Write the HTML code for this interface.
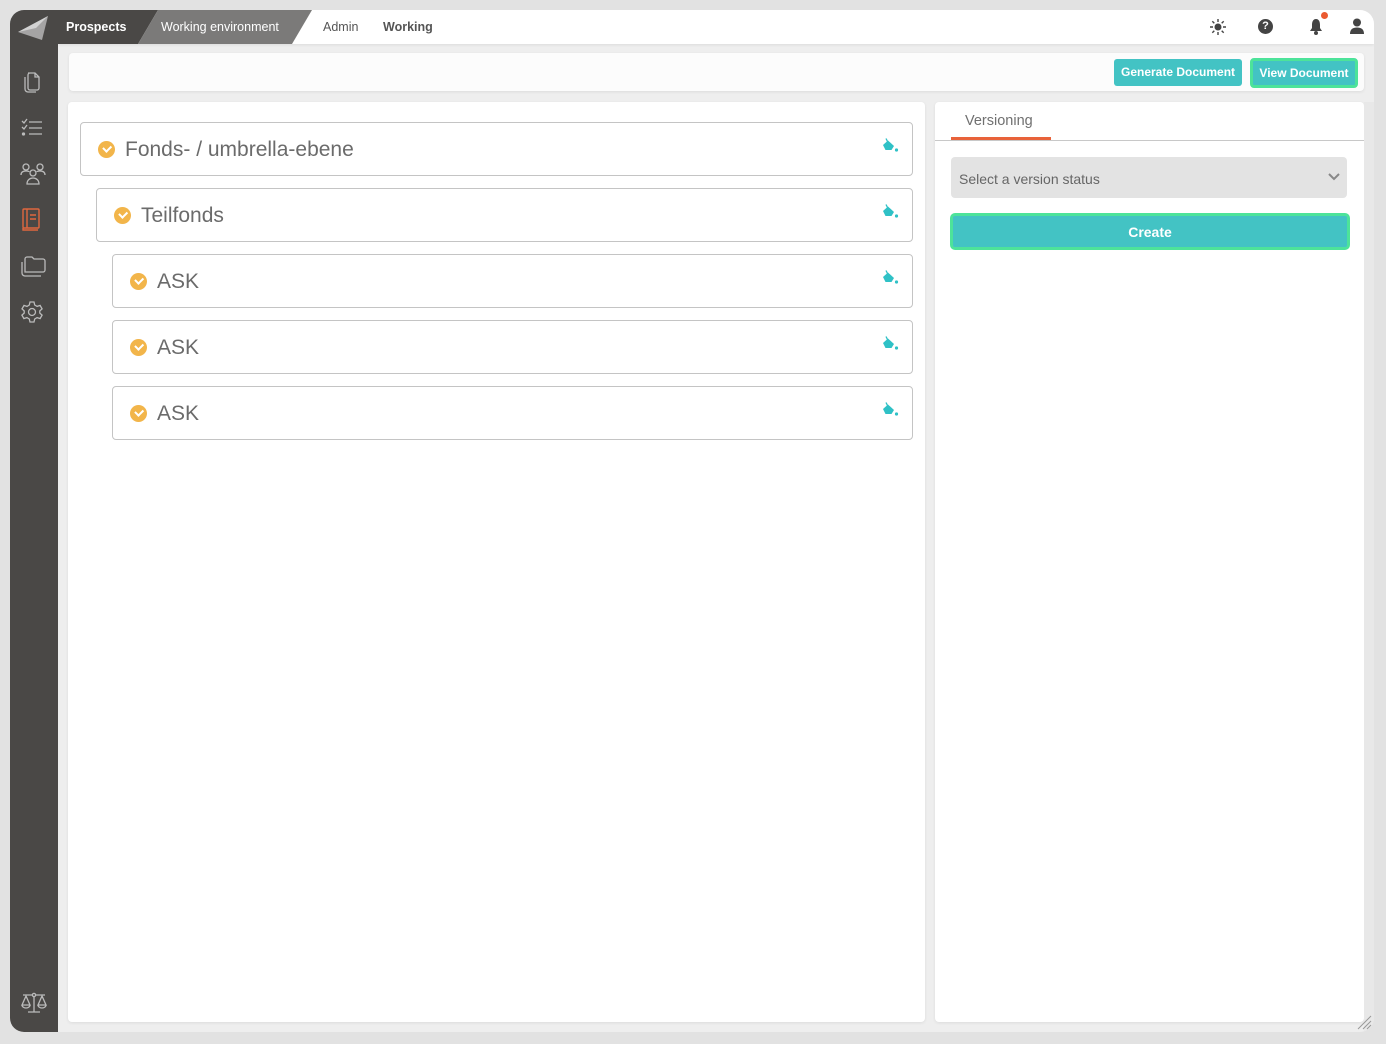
<!DOCTYPE html>
<html><head><meta charset="utf-8"><style>
*{box-sizing:border-box;margin:0;padding:0}
body{width:1386px;height:1044px;background:#e2e2e2;font-family:"Liberation Sans",sans-serif;position:relative;overflow:hidden}
.frame{position:absolute;left:10px;top:10px;width:1364px;height:1022px;border-radius:14px;background:#eeeeee;overflow:hidden}
.side{position:absolute;left:0;top:0;width:48px;height:1022px;background:#4a4846}
.top{position:absolute;left:48px;top:0;right:0;height:34px;background:#fff;box-shadow:0 1px 3px rgba(0,0,0,.08)}
.a{position:absolute}
.card{position:absolute;background:#fff;border-radius:4px;box-shadow:0 1px 3px rgba(0,0,0,.08)}
.row{position:absolute;border:1px solid #c4c4c4;border-radius:4px;background:#fff;height:54px}
.row .chk{position:absolute;left:17px;top:18px;width:17px;height:17px;border-radius:50%;background:#f2b54a}
.chk::after{content:"";position:absolute;left:5px;top:4px;width:6px;height:3.5px;border-left:2px solid #fff;border-bottom:2px solid #fff;transform:rotate(-45deg)}
.row .t{position:absolute;left:44px;top:15px;font-size:21px;color:#6b6b6b}
.btn{position:absolute;background:#43c3c4;color:#fff;font-weight:bold;font-size:12px;text-align:center;border-radius:3px}
</style></head><body>
<div class="frame">
 <div class="top"></div>
 <div class="side"></div>
 <svg class="a" style="left:0;top:0" width="330" height="34">
  <polygon points="48,0 148,0 128,34 48,34" fill="#4a4846"/>
  <polygon points="148,0 302,0 282,34 128,34" fill="#7b7a79"/>
  <polygon points="8,22 38,6 32,30" fill="#bbb" opacity=".8"/>
  <polygon points="8,22 38,6 26,18" fill="#ddd" opacity=".8"/>
 </svg>
 <div class="a" style="left:56px;top:10px;font-size:12.5px;font-weight:bold;color:#fff">Prospects</div>
 <div class="a" style="left:151px;top:10px;font-size:12.5px;color:#fff">Working environment</div>
 <div class="a" style="left:313px;top:10px;font-size:12.5px;color:#555">Admin</div>
 <div class="a" style="left:373px;top:10px;font-size:12.5px;font-weight:bold;color:#555">Working</div>
 <svg class="a" style="left:1200px;top:9px" width="16" height="16" viewBox="0 0 16 16"><circle cx="8" cy="8" r="3.5" fill="#444"/><g stroke="#444" stroke-width="1.4"><path d="M8 0v3M8 13v3M0 8h3M13 8h3M2.3 2.3l2 2M11.7 11.7l2 2M2.3 13.7l2-2M11.7 4.3l2-2"/></g></svg>
 <div class="a" style="left:1248px;top:9px;width:15px;height:15px;border-radius:50%;background:#444;color:#fff;font-size:11px;font-weight:bold;text-align:center;line-height:15px">?</div>
 <svg class="a" style="left:1299px;top:8px" width="14" height="17" viewBox="0 0 14 17"><path d="M7 1C4 1 3 4 3 7v3L1 13h12l-2-3V7c0-3-1-6-4-6z" fill="#444"/><circle cx="7" cy="15" r="2" fill="#444"/></svg>
 <div class="a" style="left:1311px;top:2px;width:7px;height:7px;border-radius:50%;background:#ea5a30"></div>
 <svg class="a" style="left:1340px;top:8px" width="14" height="16" viewBox="0 0 14 16"><circle cx="7" cy="4.5" r="4" fill="#444"/><path d="M0 16c0-5 3-6.5 7-6.5s7 1.5 7 6.5z" fill="#444"/></svg>
 <svg class="a" style="left:10px;top:60px" width="24" height="24" viewBox="0 0 24 24" fill="none" stroke="#bbb" stroke-width="1.3"><path d="M8 3h7l4 4v11a2 2 0 0 1-2 2H10a2 2 0 0 1-2-2V5a2 2 0 0 1 2-2z"/><path d="M5 7v12a3 3 0 0 0 3 3h8"/><path d="M15 3v4h4"/></svg>
 <svg class="a" style="left:10px;top:107px" width="24" height="22" viewBox="0 0 24 22" fill="none" stroke="#bbb" stroke-width="1.3"><path d="M2 4l2 2 3-4M2 10l2 2 3-4M9 5h13M9 11h13M9 17h13"/><circle cx="3.5" cy="17" r="1" fill="#bbb"/></svg>
 <svg class="a" style="left:10px;top:152px" width="26" height="24" viewBox="0 0 26 24" fill="none" stroke="#bbb" stroke-width="1.3"><circle cx="6" cy="5" r="3"/><circle cx="20" cy="5" r="3"/><circle cx="13" cy="11" r="3"/><path d="M1 13c0-3 2-4 5-4s3 1 3 1M25 13c0-3-2-4-5-4s-3 1-3 1M7 22c0-4 3-6 6-6s6 2 6 6z"/></svg>
 <svg class="a" style="left:11px;top:198px" width="20" height="24" viewBox="0 0 20 24" fill="none" stroke="#e0673f" stroke-width="1.4"><rect x="2" y="1" width="16" height="19" rx="1"/><path d="M2 20v2h15M6 1v19M9 7h6M9 11h6"/></svg>
 <svg class="a" style="left:10px;top:245px" width="26" height="22" viewBox="0 0 26 22" fill="none" stroke="#bbb" stroke-width="1.3"><path d="M5 17V4a2 2 0 0 1 2-2h5l2 2h9a2 2 0 0 1 2 2v9a2 2 0 0 1-2 2z"/><path d="M2 7v11a3 3 0 0 0 3 3h16"/></svg>
 <svg class="a" style="left:11px;top:291px" width="22" height="22" viewBox="0 0 22 22" fill="none" stroke="#bbb" stroke-width="1.3"><circle cx="11" cy="11" r="3.5"/><path d="M9 1h4l.7 3 2.4 1.4 3-1 2 3.5-2.3 2v2.2l2.3 2-2 3.5-3-1-2.4 1.4L13 21H9l-.7-3-2.4-1.4-3 1-2-3.5 2.3-2V9.9L1 7.9l2-3.5 3 1L8.3 4z"/></svg>
 <svg class="a" style="left:10px;top:982px" width="28" height="22" viewBox="0 0 28 22" fill="none" stroke="#bbb" stroke-width="1.3"><path d="M3 3h22M14 3v17M8 20h12"/><circle cx="14" cy="3" r="1.6" fill="#4a4846"/><path d="M6 4l-4 9h8zM22 4l-4 9h8zM2 13a4 3 0 0 0 8 0M18 13a4 3 0 0 0 8 0"/></svg>
 <div class="card" style="left:59px;top:43px;width:1295px;height:38px;background:#fcfcfc"></div>
 <div class="btn" style="left:1104px;top:49px;width:128px;height:27px;line-height:27px">Generate Document</div>
 <div class="btn" style="left:1240px;top:48px;width:108px;height:30px;line-height:24px;border:3px solid #4de39a;border-radius:4px">View Document</div>
 <div class="card" style="left:58px;top:92px;width:857px;height:920px"></div>
 <div class="card" style="left:925px;top:92px;width:429px;height:920px"></div>
 <div class="a" style="left:955px;top:103px;font-size:14.5px;color:#707070">Versioning</div>
 <div class="a" style="left:925px;top:130px;width:429px;height:1px;background:#c8c8c8"></div>
 <div class="a" style="left:941px;top:127px;width:100px;height:3px;background:#e8623a"></div>
 <div class="a" style="left:941px;top:147px;width:396px;height:41px;background:#e3e3e3;border-radius:4px"></div>
 <div class="a" style="left:949px;top:161px;font-size:14px;color:#666">Select a version status</div>
 <svg class="a" style="left:1318px;top:163px" width="12" height="8" viewBox="0 0 12 8"><path d="M1 1l5 5 5-5" stroke="#888" stroke-width="2" fill="none"/></svg>
 <div class="btn" style="left:940px;top:203px;width:400px;height:37px;line-height:33px;font-size:14px;border:3px solid #4de39a;border-radius:5px">Create</div>
 <div class="a" style="left:1354px;top:92px;width:10px;height:930px;background:#e8e8e8"></div>
 <svg class="a" style="left:1346px;top:1004px" width="16" height="16"><path d="M2 15L15 2M7 15L15 7M11 15l4-4" stroke="#999" stroke-width="1"/></svg>
</div>
<div class="row" style="left:80px;top:122px;right:473px"><div class="chk"></div><div class="t">Fonds- / umbrella-ebene</div></div>
<div class="row" style="left:96px;top:188px;right:473px"><div class="chk"></div><div class="t">Teilfonds</div></div>
<div class="row" style="left:112px;top:254px;right:473px"><div class="chk"></div><div class="t">ASK</div></div>
<div class="row" style="left:112px;top:320px;right:473px"><div class="chk"></div><div class="t">ASK</div></div>
<div class="row" style="left:112px;top:386px;right:473px"><div class="chk"></div><div class="t">ASK</div></div>
<svg class="a" style="left:882px;top:137px" width="18" height="18" viewBox="0 0 18 18"><path d="M4 1.5l1.5 3" stroke="#2fc1c6" stroke-width="1.3"/><path d="M1 8l5-4.5 6 5.5H1.5z" fill="#2fc1c6"/><path d="M1.5 9h10.5l-2.5 4h-6z" fill="#2fc1c6"/><circle cx="14.5" cy="13" r="1.6" fill="#2fc1c6"/></svg>
<svg class="a" style="left:882px;top:203px" width="18" height="18" viewBox="0 0 18 18"><path d="M4 1.5l1.5 3" stroke="#2fc1c6" stroke-width="1.3"/><path d="M1 8l5-4.5 6 5.5H1.5z" fill="#2fc1c6"/><path d="M1.5 9h10.5l-2.5 4h-6z" fill="#2fc1c6"/><circle cx="14.5" cy="13" r="1.6" fill="#2fc1c6"/></svg>
<svg class="a" style="left:882px;top:269px" width="18" height="18" viewBox="0 0 18 18"><path d="M4 1.5l1.5 3" stroke="#2fc1c6" stroke-width="1.3"/><path d="M1 8l5-4.5 6 5.5H1.5z" fill="#2fc1c6"/><path d="M1.5 9h10.5l-2.5 4h-6z" fill="#2fc1c6"/><circle cx="14.5" cy="13" r="1.6" fill="#2fc1c6"/></svg>
<svg class="a" style="left:882px;top:335px" width="18" height="18" viewBox="0 0 18 18"><path d="M4 1.5l1.5 3" stroke="#2fc1c6" stroke-width="1.3"/><path d="M1 8l5-4.5 6 5.5H1.5z" fill="#2fc1c6"/><path d="M1.5 9h10.5l-2.5 4h-6z" fill="#2fc1c6"/><circle cx="14.5" cy="13" r="1.6" fill="#2fc1c6"/></svg>
<svg class="a" style="left:882px;top:401px" width="18" height="18" viewBox="0 0 18 18"><path d="M4 1.5l1.5 3" stroke="#2fc1c6" stroke-width="1.3"/><path d="M1 8l5-4.5 6 5.5H1.5z" fill="#2fc1c6"/><path d="M1.5 9h10.5l-2.5 4h-6z" fill="#2fc1c6"/><circle cx="14.5" cy="13" r="1.6" fill="#2fc1c6"/></svg>
</body></html>
